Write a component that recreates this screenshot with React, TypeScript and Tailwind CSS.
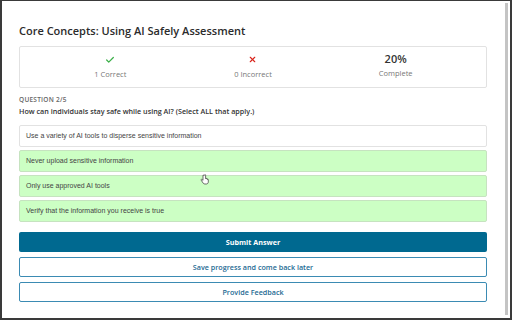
import { Check, X } from "lucide-react";

const options = [
  { text: "Use a variety of AI tools to disperse sensitive information", picked: false },
  { text: "Never upload sensitive information", picked: true },
  { text: "Only use approved AI tools", picked: true },
  { text: "Verify that the information you receive is true", picked: true },
];

export default function App() {
  return (
    <div className="flex h-[320px] w-[512px] border-b-2 border-l-2 border-r-2 border-t border-[#3a3a3a] bg-white font-['Open_Sans',sans-serif] text-[#333]">
      <main className="flex-1 pl-[17px] pr-[18px]">
        <h1 className="mt-[21px] h-[18px] text-[11px] leading-[18px] font-semibold text-[#2b2b2b]">
          Core Concepts: Using AI Safely Assessment
        </h1>

        <div className="mt-[6px] grid h-[42px] grid-cols-3 rounded-[2px] border border-[#e2e2e2] px-[19px]">
          <div className="flex flex-col items-center pt-[8px]">
            <Check className="h-[10px] w-[10px] text-[#3cb04a]" strokeWidth={3} />
            <span className="mt-[4px] text-[7.5px] leading-[10px] text-[#777]">1 Correct</span>
          </div>
          <div className="flex flex-col items-center pt-[8px]">
            <X className="h-[9px] w-[9px] text-[#d9251c]" strokeWidth={3} />
            <span className="mt-[5px] text-[7.5px] leading-[10px] text-[#777]">0 Incorrect</span>
          </div>
          <div className="flex flex-col items-center pt-[5px]">
            <span className="text-[11px] leading-[14px] font-semibold text-[#333]">20%</span>
            <span className="mt-[2px] text-[7.5px] leading-[10px] text-[#777]">Complete</span>
          </div>
        </div>

        <p className="mt-[7px] text-[6.5px] leading-[10px] font-semibold tracking-[0.04em] text-[#666]">
          QUESTION 2/5
        </p>
        <p className="mt-[1px] text-[7.2px] leading-[10px] font-semibold text-[#333]">
          How can individuals stay safe while using AI? (Select ALL that apply.)
        </p>

        <div className="relative mt-[9px] flex flex-col gap-[3px] font-['Liberation_Sans',Arial,sans-serif]">
          {options.map((o) => (
            <div
              key={o.text}
              className={
                o.picked
                  ? "flex h-[22px] items-center rounded-[2px] border border-[#c6e3c0] bg-[#ccffc4] px-[6px] text-[7px] text-[#444]"
                  : "flex h-[22px] items-center rounded-[2px] border border-[#e2e2e2] bg-white px-[6px] text-[7px] text-[#444]"
              }
            >
              {o.text}
            </div>
          ))}
          <svg
            className="absolute left-[181px] top-[49px]"
            width="9"
            height="11"
            viewBox="0 0 9 11"
          >
            <path
              d="M3 1.2v5.2l-.9-.9c-.5-.5-1.3 0-.9.7l2 3c.4.6 1 .8 1.7.8h1.4c1.2 0 2-1 2-2.1V5.6c0-.6-.9-.6-.9 0V5c0-.6-.9-.6-.9 0v-.3c0-.6-.9-.6-.9 0V1.2c0-.7-1-.7-1 0z"
              fill="#fff"
              stroke="#333"
              strokeWidth="0.7"
            />
          </svg>
        </div>

        <button
          type="button"
          className="mt-[10px] flex h-[20px] w-full items-center justify-center rounded-[2px] bg-[#006990] text-[7.2px] font-bold text-white"
        >
          Submit Answer
        </button>
        <button
          type="button"
          className="mt-[5px] flex h-[20px] w-full items-center justify-center rounded-[2px] border border-[#3b8bb3] bg-white text-[7.2px] font-semibold text-[#1d6a93]"
        >
          Save progress and come back later
        </button>
        <button
          type="button"
          className="mt-[5px] flex h-[20px] w-full items-center justify-center rounded-[2px] border border-[#3b8bb3] bg-white text-[7.2px] font-semibold text-[#1d6a93]"
        >
          Provide Feedback
        </button>
      </main>

      <div className="mr-[2px] mt-[2px] mb-[3px] w-[3px] bg-[#c4c4c4]" />
    </div>
  );
}
